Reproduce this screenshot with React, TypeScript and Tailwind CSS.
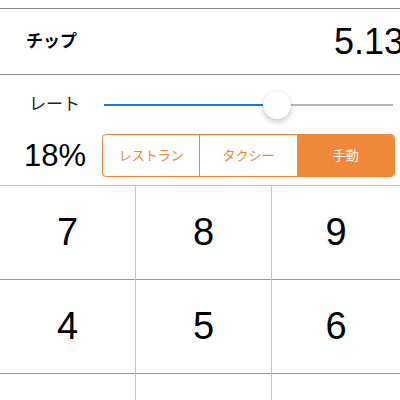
import React from 'react';

const keys = ['7', '8', '9', '4', '5', '6', '1', '2', '3'];
const modes = ['レストラン', 'タクシー', '手動'];

export default function App() {
  const rate = 0.6; // slider position

  return (
    <div className="w-[400px] h-[400px] overflow-hidden bg-white text-black font-['Liberation_Sans','Noto_Sans_CJK_JP',sans-serif]">
      {/* Tip amount header */}
      <div className="mt-[8px] h-[67px] border-y border-[#8c8c8c] flex items-center justify-between pl-[26px]">
        <span className="text-[17px] font-bold">チップ</span>
        <span className="text-[36px] leading-none mr-[-4px]">5.13</span>
      </div>

      {/* Rate slider */}
      <div className="h-[59px] flex items-center pl-[29px] pr-[7px]">
        <span className="w-[75px] text-[17px] text-[#222]">レート</span>
        <div className="relative flex-1 h-[28px] flex items-center">
          <div className="h-[2px] bg-[#1f72ec]" style={{ width: `${rate * 100}%` }} />
          <div className="h-[2px] flex-1 bg-[#b8b8b8]" />
          <div
            className="absolute top-0 w-[28px] h-[28px] -ml-[14px] rounded-full bg-white shadow-[0_3px_6px_rgba(0,0,0,0.2),0_0_1px_rgba(0,0,0,0.15)]"
            style={{ left: `${rate * 100}%` }}
          />
        </div>
      </div>

      {/* Percentage + presets */}
      <div className="h-[43px] flex items-center pl-[24px] pr-[5px]">
        <span className="w-[78px] text-[31px] leading-none">18%</span>
        <div className="flex-1 h-full flex border border-[#f0883a] rounded-[4px] overflow-hidden">
          {modes.map((m, i) => (
            <div
              key={m}
              className={
                i === 2
                  ? 'flex-1 flex items-center justify-center bg-[#f0883a] text-white text-[13px]'
                  : 'flex-1 flex items-center justify-center border-r border-[#f0883a] text-[#f0883a] text-[13px]'
              }
            >
              {m}
            </div>
          ))}
        </div>
      </div>

      {/* Keypad */}
      <div className="mt-[8px] grid grid-cols-[136px_136px_1fr] border-t border-[#c4c4c4]">
        {keys.map((k, i) => (
          <div
            key={k}
            className={
              i % 3 === 2
                ? 'h-[94px] border-b border-[#9a9a9a] flex items-center justify-center text-[38px]'
                : 'h-[94px] border-b border-r border-b-[#9a9a9a] border-r-[#c4c4c4] flex items-center justify-center text-[38px]'
            }
          >
            {k}
          </div>
        ))}
      </div>
    </div>
  );
}
